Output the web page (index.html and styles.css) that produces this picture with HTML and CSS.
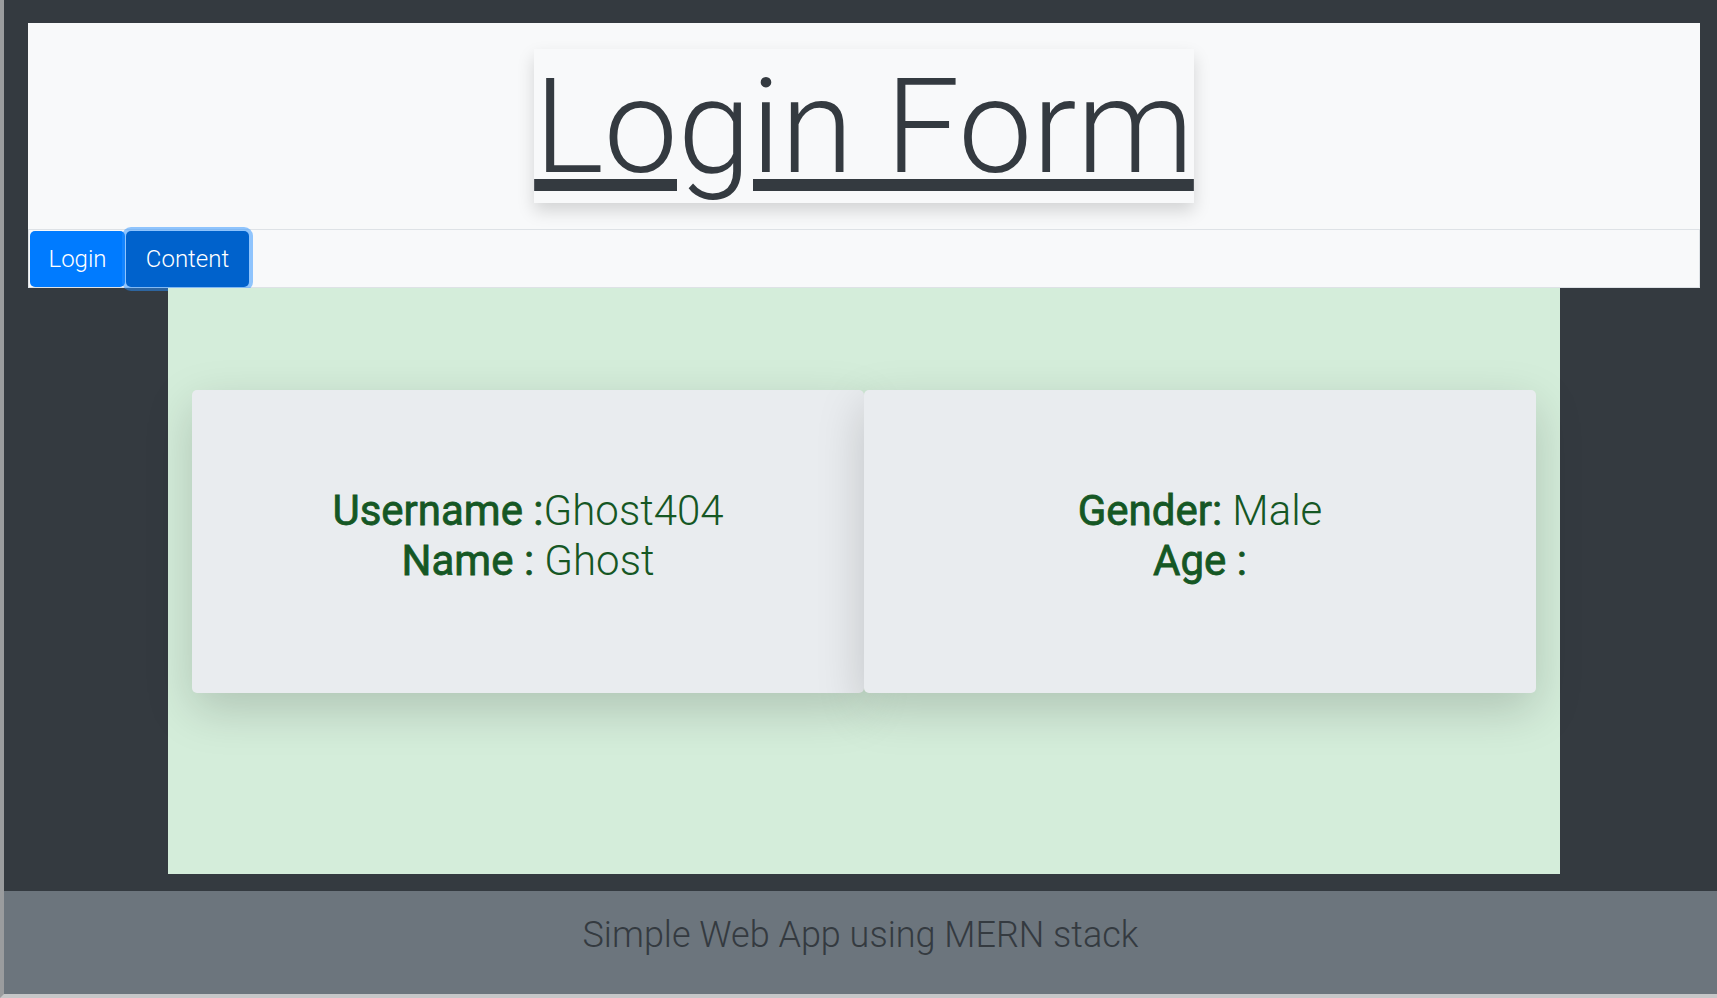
FILE: index.html
```html
<!DOCTYPE html>
<html lang="en">
<head>
<meta charset="utf-8">
<title>Login Form</title>
<link rel="stylesheet" href="styles.css">
</head>
<body>
<div class="frame">
  <div class="page">
    <header class="header">
      <div class="title-row">
        <h1 class="title">Login Form</h1>
      </div>
      <nav class="nav">
        <button class="btn">Login</button>
        <button class="btn btn-active">Content</button>
      </nav>
    </header>
    <main class="main">
      <div class="cards">
        <div class="card">
          <p class="line"><span class="label">Username :</span><span class="value">Ghost404</span></p>
          <p class="line"><span class="label">Name :</span><span class="value"> Ghost</span></p>
        </div>
        <div class="card">
          <p class="line"><span class="label">Gender:</span><span class="value"> Male</span></p>
          <p class="line"><span class="label">Age :</span><span class="value"></span></p>
        </div>
      </div>
    </main>
  </div>
  <footer class="footer">Simple Web App using MERN stack</footer>
</div>
</body>
</html>
```

FILE: styles.css
```css
* { box-sizing: border-box; }

html, body {
  margin: 0;
  padding: 0;
  height: 998px;
  overflow: hidden;
  background: #343a40;
  font-family: Roboto, "Noto Sans", sans-serif;
}

.frame {
  height: 998px;
  display: flex;
  flex-direction: column;
  border-left: 4px solid #9a9c9e;
  border-bottom: 4px solid #c6c7c8;
}

.page {
  flex: 1;
  display: flex;
  flex-direction: column;
  padding: 23px 17px 17px 24px;
}

.header {
  background: #f8f9fa;
  display: flex;
  flex-direction: column;
}

.title-row {
  height: 206px;
  display: flex;
  justify-content: center;
  align-items: center;
}

.title {
  margin: 0;
  height: 154px;
  width: 660px;
  text-align: center;
  background: #f8f9fa;
  box-shadow: 0 8px 16px rgba(0, 0, 0, 0.15);
  font-size: 132px;
  font-weight: 300;
  line-height: 156px;
  color: #343a40;
  text-decoration: underline;
  text-decoration-thickness: 12px;
  text-underline-offset: 7px;
  white-space: nowrap;
}

.nav {
  height: 59px;
  display: flex;
  gap: 1px;
  padding: 1px 1px 0 1px;
  border: 1px solid #dee2e6;
}

.btn {
  height: 56px;
  padding: 0 16px;
  border: none;
  border-radius: 5px;
  background: #007bff;
  color: #fff;
  font-family: Roboto, "Noto Sans", sans-serif;
  font-size: 24px;
  font-weight: 300;
  cursor: pointer;
}

.btn:first-child { width: 95px; }

.btn-active {
  width: 123px;
  background: #0062cc;
  box-shadow: 0 0 0 4px rgba(38, 143, 255, 0.5);
}

.main {
  flex: 1;
  width: 1392px;
  margin: 0 auto;
  background: #d4edda;
  padding: 102px 24px 0 24px;
}

.cards {
  display: flex;
}

.card {
  flex: 1;
  height: 303px;
  background: #e9ecef;
  border-radius: 5px;
  box-shadow: 0 16px 48px rgba(0, 0, 0, 0.175);
  display: flex;
  flex-direction: column;
  align-items: center;
  justify-content: center;
  padding-bottom: 12px;
  color: #155724;
}

.line {
  margin: 0;
  font-size: 42px;
  line-height: 50px;
  white-space: pre;
}

.label {
  font-weight: 400;
  -webkit-text-stroke: 0.8px currentColor;
}
.value { font-weight: 300; }

.footer {
  height: 103px;
  background: #6c757d;
  color: #343a40;
  display: flex;
  align-items: center;
  justify-content: center;
  font-size: 36px;
  font-weight: 300;
  padding-bottom: 16px;
}
```
